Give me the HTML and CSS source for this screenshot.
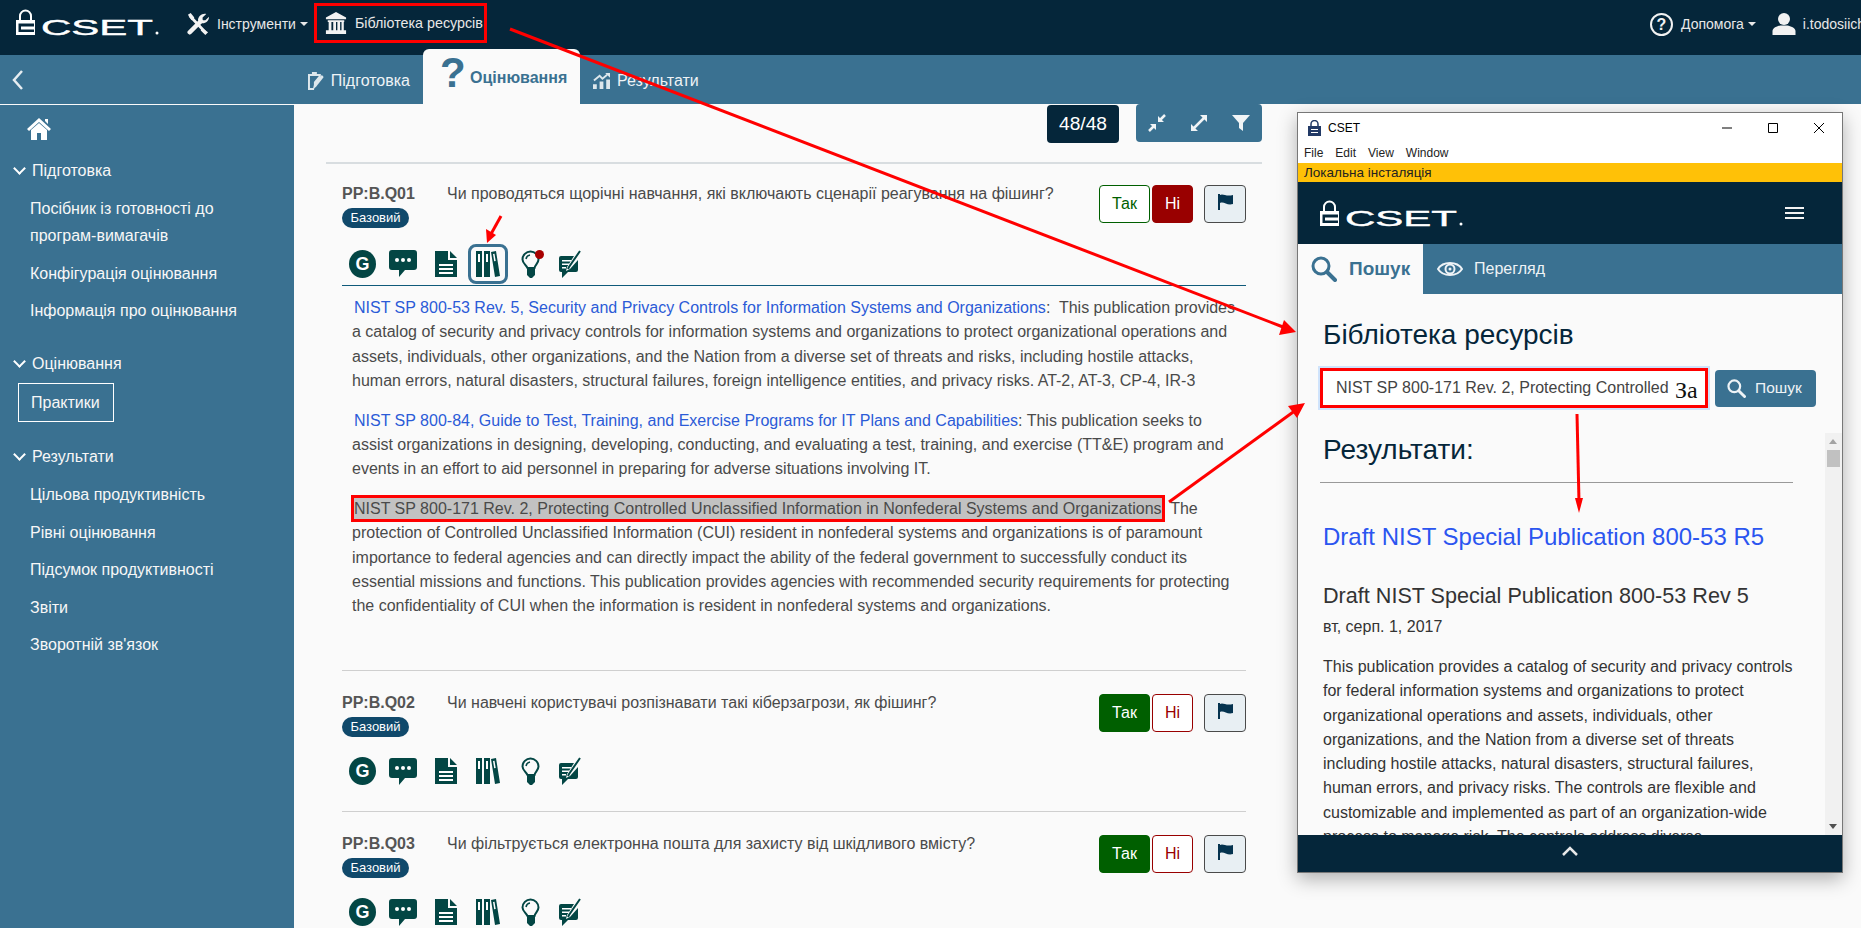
FILE: index.html
```html
<!DOCTYPE html>
<html lang="uk">
<head>
  <meta charset="UTF-8">
  <title>CSET</title>
  <link rel="stylesheet" href="styles.css">
</head>
<body>
  <!-- Icon sprite -->
  <svg class="sprite" aria-hidden="true">
    <symbol id="logo" viewBox="0 0 144 27">
      <path d="M5 11V7a5.500 5.500 0 0 1 11 0v4" fill="none" stroke="currentColor" stroke-width="2"/>
      <path d="M1 11H20V26H1Z M3.500 14.500V23H19V20.500H6V17.500H19V14.500Z" fill="currentColor" fill-rule="evenodd"/>
      <text class="logo-text" x="26" y="26" textLength="112" lengthAdjust="spacingAndGlyphs">CSET</text>
      <circle cx="142" cy="24" r="1.500" fill="currentColor"/>
    </symbol>
    <symbol id="tools" viewBox="0 0 24 24">
      <path d="M3 3L20 21" stroke="currentColor" stroke-width="3" fill="none"/>
      <path d="M1 2L4 0L8 5L5 8Z M16 16L23 21L20 24L15 19Z" fill="currentColor"/>
      <path d="M3 21L15 9" stroke="currentColor" stroke-width="5" stroke-linecap="round" fill="none"/>
      <path d="M21 1L17 5V8H20L24 4C24 9 20 12 15 11L12 8C12 4 16 0 21 1Z" fill="currentColor"/>
    </symbol>
    <symbol id="bank" viewBox="0 0 24 24">
      <path d="M12 0L23 6V8H1V6Z M3 9H21V11H3Z M1 20H23V24H1Z M4 11H7V20H4Z M9 11H12V20H9Z M13.500 11H16.500V20H13.500Z M18 11H20.500V20H18Z" fill="currentColor"/>
    </symbol>
    <symbol id="clipboard" viewBox="0 0 17 20">
      <path d="M1 3H5V1H10V3H14V8L8 15L7 19H1Z" fill="currentColor"/>
      <path d="M3 5H12L7 11V17H3Z" fill="#3a7191"/>
      <path d="M15 4L17 6L9 16L6 18L7 14Z" fill="currentColor"/>
    </symbol>
    <symbol id="chart" viewBox="0 0 18 17">
      <path d="M0 12H4V17H0Z M7 9H11V17H7Z M14 7H18V17H14Z" fill="currentColor"/>
      <path d="M1 8L7 3L10 6L15 2" fill="none" stroke="currentColor" stroke-width="2"/>
      <path d="M13 0H18V5Z" fill="currentColor"/>
    </symbol>
    <symbol id="home" viewBox="0 0 24 22">
      <path d="M12 0L24 11L22 13L12 4L2 13L0 11Z M4 12L12 5L20 12V22H14V15H10V22H4Z M18 1H21V6L18 3Z" fill="currentColor"/>
    </symbol>
    <symbol id="compress" viewBox="0 0 18 18">
      <path d="M17 1L12 6M1 17L6 12" stroke="currentColor" stroke-width="2.500" fill="none"/>
      <path d="M10 2V8H16Z M2 10H8V16Z" fill="currentColor"/>
    </symbol>
    <symbol id="expand" viewBox="0 0 18 18">
      <path d="M3 15L15 3" stroke="currentColor" stroke-width="2.500" fill="none"/>
      <path d="M10 1H17V8Z M1 10V17H8Z" fill="currentColor"/>
    </symbol>
    <symbol id="filter" viewBox="0 0 18 16">
      <path d="M0 0H18L11 8V16L7 13V8Z" fill="currentColor"/>
    </symbol>
    <symbol id="flag" viewBox="0 0 16 16">
      <path d="M1 0H3V16H1Z M3 1C6 -1 9 3 16 1V10C10 12 7 7 3 9Z" fill="currentColor"/>
    </symbol>
    <symbol id="comment" viewBox="0 0 28 27">
      <path d="M3 0H25A3 3 0 0 1 28 3V17A3 3 0 0 1 25 20H16L10 27V20H3A3 3 0 0 1 0 17V3A3 3 0 0 1 3 0Z" fill="currentColor"/>
      <circle cx="8" cy="10" r="2" fill="#fff"/><circle cx="14" cy="10" r="2" fill="#fff"/><circle cx="20" cy="10" r="2" fill="#fff"/>
    </symbol>
    <symbol id="doc" viewBox="0 0 22 26">
      <path d="M0 0H13V9H22V26H0Z M15 0L22 7H15Z" fill="currentColor"/>
      <path d="M4 13H18V15H4Z M4 17H18V19H4Z M4 21H18V23H4Z" fill="#fff"/>
    </symbol>
    <symbol id="books" viewBox="0 0 24 26">
      <path d="M0 0H6V26H0Z M8 0H14V26H8Z M15 1L20 0L24 25L19 26Z" fill="currentColor"/>
      <path d="M2 3H4V11H2Z M10 3H12V11H10Z M17 3L18.500 2.700L19.700 10L18.200 10.300Z" fill="#fff"/>
    </symbol>
    <symbol id="bulb" viewBox="0 0 20 28">
      <path d="M6.500 18C5 15 1.500 13 1.500 9.500A8 8 0 0 1 17.500 9.500C17.500 13 14 15 13.500 18Z" fill="none" stroke="currentColor" stroke-width="2"/>
      <path d="M6 19H14V25L11 28H9L6 25Z" fill="currentColor"/>
      <path d="M5 9A5 5 0 0 1 9 5" fill="none" stroke="currentColor" stroke-width="1.500"/>
    </symbol>
    <symbol id="note" viewBox="0 0 23 28">
      <path d="M2 6H15L8 17L7 21L11 19L19 10V20A2 2 0 0 1 17 22H9L3 28V22H2A2 2 0 0 1 0 20V8A2 2 0 0 1 2 6Z" fill="currentColor"/>
      <path d="M3 10H12V11.500H3Z M3 13.500H10V15H3Z M3 17H7V18.500H3Z" fill="#fff"/>
      <path d="M21 1L10 17L9 19" fill="none" stroke="currentColor" stroke-width="2"/>
    </symbol>
    <symbol id="user" viewBox="0 0 23 22">
      <circle cx="11.500" cy="6" r="6" fill="currentColor"/>
      <path d="M0 22V18C0 15 5 13 8 12.500H15C18 13 23 15 23 18V22Z" fill="currentColor"/>
    </symbol>
    <symbol id="search" viewBox="0 0 26 26">
      <circle cx="10" cy="10" r="8" fill="none" stroke="currentColor" stroke-width="3"/>
      <path d="M16 16L24 24" stroke="currentColor" stroke-width="4" stroke-linecap="round"/>
    </symbol>
    <symbol id="eye" viewBox="0 0 26 18">
      <path d="M1 9C6 1 20 1 25 9C20 17 6 17 1 9Z" fill="none" stroke="currentColor" stroke-width="2"/>
      <circle cx="13" cy="9" r="4.500" fill="none" stroke="currentColor" stroke-width="2"/>
      <circle cx="13" cy="9" r="1.500" fill="currentColor"/>
    </symbol>
    <symbol id="lock" viewBox="0 0 13 16">
      <path d="M3 7V4a3.500 3.500 0 0 1 7 0v3" fill="none" stroke="currentColor" stroke-width="1.500"/>
      <path d="M0 6H13V16H0Z" fill="currentColor"/>
      <path d="M3 9H10V10H3Z M3 12H10V13H3Z" fill="#fff"/>
    </symbol>
  </svg>

  <!-- Top bar -->
  <header class="topbar">
    <svg class="logo"><use href="#logo"/></svg>
    <a class="nav-link nav-tools">
      <svg class="nav-icon"><use href="#tools"/></svg>
      <span>Інструменти</span><i class="caret"></i>
    </a>
    <a class="nav-link nav-library">
      <svg class="nav-icon"><use href="#bank"/></svg>
      <span>Бібліотека ресурсів</span>
    </a>
    <div class="topbar-right">
      <a class="nav-link">
        <span class="help-icon">?</span>
        <span>Допомога</span><i class="caret"></i>
      </a>
      <a class="nav-link nav-user">
        <svg class="nav-icon"><use href="#user"/></svg>
        <span>i.todosiichuk</span>
      </a>
    </div>
  </header>

  <!-- Tabs -->
  <nav class="tabbar">
    <div class="tabbar-side">
      <svg class="back" viewBox="0 0 12 22"><path d="M10 2L2 11L10 20" fill="none" stroke="currentColor" stroke-width="2.500"/></svg>
    </div>
    <a class="tab tab-first"><svg class="tab-icon"><use href="#clipboard"/></svg>Підготовка</a>
    <a class="tab tab-active"><span class="tab-question">?</span>Оцінювання</a>
    <a class="tab"><svg class="tab-icon"><use href="#chart"/></svg>Результати</a>
  </nav>

  <div class="page">
    <!-- Sidebar -->
    <aside class="sidebar">
      <svg class="side-home"><use href="#home"/></svg>

      <div class="side-head side-head-first"><i class="chev"></i>Підготовка</div>
      <a class="side-item">Посібник із готовності до програм-вимагачів</a>
      <a class="side-item">Конфігурація оцінювання</a>
      <a class="side-item">Інформація про оцінювання</a>

      <div class="side-head side-head-assess"><i class="chev"></i>Оцінювання</div>
      <a class="side-active">Практики</a>

      <div class="side-head side-head-results"><i class="chev"></i>Результати</div>
      <a class="side-item">Цільова продуктивність</a>
      <a class="side-item">Рівні оцінювання</a>
      <a class="side-item">Підсумок продуктивності</a>
      <a class="side-item">Звіти</a>
      <a class="side-item">Зворотній зв'язок</a>
    </aside>

    <!-- Questions -->
    <main class="content">
      <div class="toolbar">
        <span class="count">48/48</span>
        <div class="tool-group">
          <a class="tool-btn"><svg><use href="#compress"/></svg></a>
          <a class="tool-btn"><svg><use href="#expand"/></svg></a>
          <a class="tool-btn"><svg><use href="#filter"/></svg></a>
        </div>
      </div>

      <section class="question question-open">
        <div class="q-head">
          <div class="q-id">
            <div class="q-code">PP:B.Q01</div>
            <span class="badge">Базовий</span>
          </div>
          <div class="q-text">Чи проводяться щорічні навчання, які включають сценарії реагування на фішинг?</div>
          <div class="answers">
            <button class="btn-yes">Так</button>
            <button class="btn-no btn-no-on">Ні</button>
            <button class="btn-flag"><svg><use href="#flag"/></svg></button>
          </div>
        </div>
        <div class="q-tools q-tools-open">
          <span class="g-icon">G</span>
          <svg class="ic ic-comment"><use href="#comment"/></svg>
          <svg class="ic ic-doc"><use href="#doc"/></svg>
          <span class="ic-selected"><svg class="ic ic-books"><use href="#books"/></svg></span>
          <span class="bulb-wrap"><svg class="ic ic-bulb"><use href="#bulb"/></svg><i class="bulb-dot"></i></span>
          <svg class="ic ic-note"><use href="#note"/></svg>
        </div>
        <div class="refs">
          <p><a class="ref-link">NIST SP 800-53 Rev. 5, Security and Privacy Controls for Information Systems and Organizations</a>:&nbsp; This publication provides a catalog of security and privacy controls for information systems and organizations to protect organizational operations and assets, individuals, other organizations, and the Nation from a diverse set of threats and risks, including hostile attacks, human errors, natural disasters, structural failures, foreign intelligence entities, and privacy risks. AT-2, AT-3, CP-4, IR-3</p>
          <p><a class="ref-link">NIST SP 800-84, Guide to Test, Training, and Exercise Programs for IT Plans and Capabilities</a>: This publication seeks to assist organizations in designing, developing, conducting, and evaluating a test, training, and exercise (TT&amp;E) program and events in an effort to aid personnel in preparing for adverse situations involving IT.</p>
          <p><mark class="ref-mark">NIST SP 800-171 Rev. 2, Protecting Controlled Unclassified Information in Nonfederal Systems and Organizations</mark>&nbsp; The protection of Controlled Unclassified Information (CUI) resident in nonfederal systems and organizations is of paramount importance to federal agencies and can directly impact the ability of the federal government to successfully conduct its essential missions and functions. This publication provides agencies with recommended security requirements for protecting the confidentiality of CUI when the information is resident in nonfederal systems and organizations.</p>
        </div>
      </section>

      <section class="question">
        <div class="q-head">
          <div class="q-id">
            <div class="q-code">PP:B.Q02</div>
            <span class="badge">Базовий</span>
          </div>
          <div class="q-text">Чи навчені користувачі розпізнавати такі кіберзагрози, як фішинг?</div>
          <div class="answers">
            <button class="btn-yes btn-yes-on">Так</button>
            <button class="btn-no">Ні</button>
            <button class="btn-flag"><svg><use href="#flag"/></svg></button>
          </div>
        </div>
        <div class="q-tools">
          <span class="g-icon">G</span>
          <svg class="ic ic-comment"><use href="#comment"/></svg>
          <svg class="ic ic-doc"><use href="#doc"/></svg>
          <span class="ic-plain"><svg class="ic ic-books"><use href="#books"/></svg></span>
          <span class="bulb-wrap"><svg class="ic ic-bulb"><use href="#bulb"/></svg></span>
          <svg class="ic ic-note"><use href="#note"/></svg>
        </div>
      </section>

      <section class="question">
        <div class="q-head">
          <div class="q-id">
            <div class="q-code">PP:B.Q03</div>
            <span class="badge">Базовий</span>
          </div>
          <div class="q-text">Чи фільтрується електронна пошта для захисту від шкідливого вмісту?</div>
          <div class="answers">
            <button class="btn-yes btn-yes-on">Так</button>
            <button class="btn-no">Ні</button>
            <button class="btn-flag"><svg><use href="#flag"/></svg></button>
          </div>
        </div>
        <div class="q-tools">
          <span class="g-icon">G</span>
          <svg class="ic ic-comment"><use href="#comment"/></svg>
          <svg class="ic ic-doc"><use href="#doc"/></svg>
          <span class="ic-plain"><svg class="ic ic-books"><use href="#books"/></svg></span>
          <span class="bulb-wrap"><svg class="ic ic-bulb"><use href="#bulb"/></svg></span>
          <svg class="ic ic-note"><use href="#note"/></svg>
        </div>
      </section>
    </main>
  </div>

  <!-- Resource library window -->
  <div class="window">
    <div class="win-title">
      <svg class="win-lock"><use href="#lock"/></svg>
      <span>CSET</span>
      <div class="win-controls">
        <svg viewBox="0 0 12 12"><path d="M1 6H11" stroke="#000" fill="none"/></svg>
        <svg viewBox="0 0 12 12"><path d="M1.500 1.500H10.500V10.500H1.500Z" stroke="#000" fill="none"/></svg>
        <svg viewBox="0 0 12 12"><path d="M1 1L11 11M11 1L1 11" stroke="#000" fill="none"/></svg>
      </div>
    </div>
    <div class="win-menu"><span>File</span><span>Edit</span><span>View</span><span>Window</span></div>
    <div class="win-local">Локальна інсталяція</div>
    <div class="win-header">
      <svg class="logo"><use href="#logo"/></svg>
      <div class="burger"><i></i><i></i><i></i></div>
    </div>
    <div class="win-tabs">
      <a class="win-tab win-tab-active"><svg class="win-search"><use href="#search"/></svg>Пошук</a>
      <a class="win-tab"><svg class="win-eye"><use href="#eye"/></svg>Перегляд</a>
    </div>
    <div class="win-search-area">
      <h2 class="win-h">Бібліотека ресурсів</h2>
      <div class="search-row">
        <div class="search-box">
          <input class="search-input" value="NIST SP 800-171 Rev. 2, Protecting Controlled Unclassified Information">
          <span class="translate-bubble">За</span>
        </div>
        <button class="search-btn"><svg><use href="#search"/></svg>Пошук</button>
      </div>
    </div>
    <div class="win-results">
      <div class="results-scroll">
        <h2 class="win-h">Результати:</h2>
        <hr class="results-hr">
        <a class="result-link">Draft NIST Special Publication 800-53 R5</a>
        <h3 class="result-title">Draft NIST Special Publication 800-53 Rev 5</h3>
        <div class="result-date">вт, серп. 1, 2017</div>
        <p class="result-body">This publication provides a catalog of security and privacy controls for federal information systems and organizations to protect organizational operations and assets, individuals, other organizations, and the Nation from a diverse set of threats including hostile attacks, natural disasters, structural failures, human errors, and privacy risks. The controls are flexible and customizable and implemented as part of an organization-wide process to manage risk. The controls address diverse</p>
      </div>
      <div class="scrollbar">
        <i class="sb-up"></i>
        <i class="sb-thumb"></i>
        <i class="sb-down"></i>
      </div>
    </div>
    <div class="win-footer">
      <svg viewBox="0 0 16 10"><path d="M1 9L8 2L15 9" fill="none" stroke="currentColor" stroke-width="2.500"/></svg>
    </div>
  </div>

  <!-- Red annotation arrows -->
  <svg class="arrows" viewBox="0 0 1861 928">
    <path d="M510 29L1283 327" class="arrow-line"/>
    <path d="M1296 332L1279 335L1284 320Z" class="arrow-head"/>
    <path d="M1169 502L1296 410" class="arrow-line"/>
    <path d="M1305 403L1297 418L1288 406Z" class="arrow-head"/>
    <path d="M501 216L491 234" class="arrow-line"/>
    <path d="M487 243L486 229L496 235Z" class="arrow-head"/>
    <path d="M1577 414L1579 502" class="arrow-line"/>
    <path d="M1579 513L1575 498L1583 498Z" class="arrow-head"/>
  </svg>
</body>
</html>
```

FILE: styles.css
```css
/* Page */
html, body {
  height: 100%;
}

body {
  margin: 0;
  height: 928px;
  overflow: hidden;
  display: flex;
  flex-direction: column;
  position: relative;
  font-family: "Liberation Sans", Arial, sans-serif;
  font-size: 16px;
  color: #4a4a4a;
  background-color: #fafafa;
}

.sprite {
  position: absolute;
  width: 0;
  height: 0;
}

.logo-text {
  font-family: "Liberation Sans", Arial, sans-serif;
  font-size: 22px;
  fill: currentColor;
  stroke: currentColor;
  stroke-width: 0.4px;
}

/* Top bar */
.topbar {
  height: 55px;
  flex: none;
  box-sizing: border-box;
  display: flex;
  align-items: center;
  padding: 0 0 7px 15px;
  background-color: #05263a;
  color: #f2f2f2;
}

.logo {
  width: 144px;
  height: 27px;
  color: #fff;
}

.topbar .logo {
  margin-top: -3px;
}

.nav-link {
  display: flex;
  align-items: center;
  font-size: 14px;
  color: #e8e8e8;
  white-space: nowrap;
}

.nav-tools {
  margin-left: 27px;
}

.nav-library {
  margin: -2px 0 0 6px;
  height: 40px;
  width: 173px;
  padding: 0 0 0 7px;
  border: 3px solid #f00;
  box-sizing: border-box;
  font-size: 14.300px;
}

.nav-icon {
  flex: none;
  width: 24px;
  height: 22px;
  margin-right: 7px;
  color: #f2f2f2;
}

.caret {
  display: inline-block;
  margin-left: 4px;
  border-top: 4px solid #e8e8e8;
  border-left: 4px solid transparent;
  border-right: 4px solid transparent;
}

.topbar-right {
  margin-left: auto;
  display: flex;
  width: 211px;
  overflow: hidden;
  flex: none;
}

.help-icon {
  width: 19px;
  height: 19px;
  margin-right: 8px;
  border: 2.500px solid #f2f2f2;
  border-radius: 50%;
  font-size: 16px;
  font-weight: bold;
  line-height: 19px;
  text-align: center;
  color: #f2f2f2;
}

.nav-user {
  margin-left: 16px;
}

/* Tabs */
.tabbar {
  height: 49px;
  flex: none;
  display: flex;
  align-items: flex-end;
  background-color: #3a7191;
  color: #eef3f6;
}

.tabbar-side {
  width: 294px;
  height: 49px;
  padding-left: 12px;
  box-sizing: border-box;
}

.back {
  width: 12px;
  height: 22px;
  margin-top: 14px;
  color: #e6edf1;
}

.tab {
  display: flex;
  align-items: center;
  height: 49px;
  padding: 2px 13px 0;
  box-sizing: border-box;
  font-size: 16px;
  white-space: nowrap;
}

.tab-first {
  width: 129px;
}

.tab-icon {
  width: 17px;
  height: 20px;
  margin-right: 7px;
  color: #dde7ec;
}

.tab-active {
  width: 157px;
  height: 55px;
  padding: 3px 0 0 17px;
  border-radius: 6px 6px 0 0;
  background-color: #fafafa;
  color: #3a7191;
  font-weight: bold;
}

.tab-question {
  width: 30px;
  margin-top: -10px;
  font-size: 42px;
  line-height: 42px;
}

/* Layout below the tabs */
.page {
  flex: 1;
  min-height: 0;
  display: flex;
}

/* Sidebar */
.sidebar {
  width: 294px;
  flex: none;
  box-sizing: border-box;
  padding-left: 30px;
  border-top: 1px solid #fafafa;
  background-color: #3a7191;
  color: #f7f7f7;
}

.side-home {
  display: block;
  width: 24px;
  height: 22px;
  margin: 13px 0 0 -3px;
  color: #fff;
}

.side-head {
  position: relative;
  line-height: 27px;
  padding-left: 2px;
}

.side-head-first {
  margin-top: 17px;
  margin-bottom: 11px;
}

.side-head-assess {
  margin-top: 26px;
  margin-bottom: 6px;
}

.side-head-results {
  margin-top: 21px;
  margin-bottom: 11px;
}

.chev {
  position: absolute;
  left: -15px;
  top: 7px;
  width: 7px;
  height: 7px;
  border-right: 2.500px solid #fff;
  border-bottom: 2.500px solid #fff;
  transform: rotate(45deg);
}

.side-item {
  display: block;
  width: 230px;
  line-height: 27px;
  margin-bottom: 10.500px;
}

.side-active {
  display: block;
  width: 96px;
  height: 39px;
  margin-left: -12px;
  box-sizing: border-box;
  border: 1px solid #fff;
  line-height: 37px;
  padding-left: 12px;
}

/* Question list */
.content {
  width: 936px;
  margin-left: 32px;
  overflow: hidden;
}

.toolbar {
  height: 58px;
  display: flex;
  justify-content: flex-end;
  align-items: flex-start;
  box-sizing: content-box;
  border-bottom: 2px solid #d8dde0;
}

.count {
  width: 72px;
  height: 38px;
  margin: 1px 17px 0 0;
  border-radius: 4px;
  background-color: #05263a;
  color: #fff;
  font-size: 19.200px;
  line-height: 38px;
  text-align: center;
}

.tool-group {
  display: flex;
  width: 126px;
  height: 38px;
  border-radius: 4px;
  background-color: #3a7191;
}

.tool-btn {
  flex: 1;
  display: flex;
  align-items: center;
  justify-content: center;
  color: #f0f4f6;
}

.tool-btn svg {
  width: 18px;
  height: 18px;
}

.question {
  margin: 0 16px;
  padding: 23px 0 19px;
  border-bottom: 1px solid #cfcfcf;
}

.question-open {
  padding-top: 21px;
  padding-bottom: 0;
}

.q-head {
  display: flex;
  height: 57px;
}

.q-id {
  width: 105px;
  flex: none;
}

.q-code {
  font-weight: bold;
  line-height: 18px;
  color: #555;
}

.badge {
  display: inline-block;
  margin-top: 5px;
  width: 67px;
  height: 20px;
  border-radius: 10px;
  background-color: #10496b;
  color: #fff;
  font-size: 13px;
  line-height: 20px;
  text-align: center;
}

.q-text {
  flex: 1;
  line-height: 18px;
  color: #4a4a4a;
}

.answers {
  display: flex;
  align-items: flex-start;
}

.answers button {
  height: 38px;
  padding: 0;
  border-radius: 4px;
  font-family: inherit;
  font-size: 16px;
  background-color: #fff;
}

.btn-yes {
  width: 51px;
  margin-right: 2px;
  border: 1px solid #005f00;
  color: #005f00;
}

.btn-yes-on {
  background-color: #005f00 !important;
  color: #fff;
}

.btn-no {
  width: 41px;
  margin-right: 11px;
  border: 1px solid #990000;
  color: #990000;
}

.btn-no-on {
  background-color: #990000 !important;
  color: #fff;
}

.btn-flag {
  width: 42px;
  border: 1px solid #4a4a4a;
  background-color: #e8eff3 !important;
  color: #05334f;
}

.btn-flag svg {
  width: 16px;
  height: 16px;
}

/* Icon row under each question */
.q-tools {
  display: flex;
  align-items: center;
  height: 41px;
  padding-left: 7px;
  color: #034644;
}

.q-tools-open {
  height: 43px;
  border-bottom: 1px solid #0f5a7a;
  margin-bottom: 10px;
}

.g-icon {
  width: 27px;
  height: 28px;
  margin-right: 13px;
  border-radius: 50%;
  background-color: #034644;
  color: #fff;
  font-size: 18px;
  font-weight: bold;
  line-height: 28px;
  text-align: center;
}

.ic-comment {
  width: 28px;
  height: 27px;
  margin-right: 18px;
}

.ic-doc {
  width: 22px;
  height: 26px;
  margin-right: 11px;
}

.ic-selected,
.ic-plain {
  display: flex;
  align-items: center;
  justify-content: center;
  width: 40px;
  height: 40px;
  margin-right: 13px;
  box-sizing: border-box;
  border-radius: 8px;
}

.ic-selected {
  border: 3px solid #3a7191;
}

.ic-books {
  width: 24px;
  height: 26px;
}

.bulb-wrap {
  position: relative;
  display: block;
  width: 20px;
  height: 28px;
  margin-right: 18px;
}

.ic-bulb {
  width: 20px;
  height: 28px;
}

.bulb-dot {
  position: absolute;
  right: -3px;
  top: 0;
  width: 9px;
  height: 9px;
  border-radius: 50%;
  background-color: #a80000;
}

.ic-note {
  width: 23px;
  height: 28px;
}

/* Reference list */
.refs {
  padding: 0 0 51px 10px;
  line-height: 24.300px;
}

.refs p {
  margin: 0 0 15.500px;
}

.refs p:last-child {
  margin-bottom: 0;
}

.ref-link {
  margin-left: 2px;
  color: #2b5bd7;
}

.ref-mark {
  margin-left: 2px;
  padding: 2px 0;
  background-color: #c2c2c2;
  outline: 3px solid #f00;
  color: #4a4a4a;
}

/* Resource library window */
.window {
  position: absolute;
  left: 1297px;
  top: 112px;
  width: 546px;
  height: 761px;
  box-sizing: border-box;
  display: flex;
  flex-direction: column;
  border: 1px solid #777;
  background-color: #fafafa;
  box-shadow: 0 6px 18px rgba(0, 0, 0, 0.3);
  color: #333;
}

.win-title {
  height: 30px;
  flex: none;
  display: flex;
  align-items: center;
  padding-left: 10px;
  background-color: #fff;
  font-size: 12px;
  color: #000;
}

.win-lock {
  width: 13px;
  height: 16px;
  margin-right: 7px;
  color: #223a66;
}

.win-controls {
  margin-left: auto;
  display: flex;
  gap: 34px;
  padding-right: 17px;
}

.win-controls svg {
  width: 12px;
  height: 12px;
}

.win-menu {
  height: 20px;
  flex: none;
  padding: 0 0 0 6px;
  display: flex;
  gap: 12px;
  align-items: center;
  background-color: #fff;
  font-size: 12px;
  line-height: 14px;
  color: #222;
}

.win-local {
  height: 19px;
  flex: none;
  padding-left: 6px;
  background-color: #ffc107;
  color: #222;
  font-size: 13.500px;
  line-height: 19px;
}

.win-header {
  height: 62px;
  flex: none;
  display: flex;
  align-items: center;
  justify-content: space-between;
  padding: 0 38px 0 21px;
  background-color: #05263a;
}

.burger i {
  display: block;
  width: 19px;
  height: 2px;
  margin: 3px 0;
  background-color: #f2f2f2;
}

.win-tabs {
  height: 50px;
  flex: none;
  display: flex;
  background-color: #3a7191;
  color: #eef3f6;
}

.win-tab {
  display: flex;
  align-items: center;
  padding-left: 14px;
  font-size: 16px;
}

.win-tab-active {
  width: 125px;
  padding-left: 13px;
  box-sizing: border-box;
  background-color: #fafafa;
  color: #3a7191;
  font-size: 19px;
  font-weight: bold;
}

.win-search {
  width: 26px;
  height: 26px;
  margin-right: 12px;
}

.win-eye {
  width: 26px;
  height: 18px;
  margin-right: 11px;
}

.win-search-area {
  height: 139px;
  flex: none;
  padding-left: 22px;
  box-sizing: border-box;
}

.win-h {
  margin: 0;
  font-size: 28px;
  font-weight: normal;
  line-height: 34px;
  color: #05263a;
  padding-left: 3px;
}

.win-search-area .win-h {
  margin-top: 24px;
}

.search-row {
  display: flex;
  align-items: center;
  gap: 7px;
  margin-top: 16px;
}

.search-box {
  position: relative;
  width: 388px;
  height: 40px;
}

.search-input {
  width: 100%;
  height: 100%;
  padding: 0 35px 0 13px;
  box-sizing: border-box;
  border: 3px solid #f00;
  background-color: #fff;
  box-shadow: 0 0 0 2px #cfe3fb;
  font-family: inherit;
  font-size: 16px;
  color: #444;
  outline: none;
}

.translate-bubble {
  position: absolute;
  right: 10px;
  top: 4px;
  width: 23px;
  height: 32px;
  background-color: #fff;
  border-radius: 10px;
  font-family: "Liberation Serif", serif;
  font-size: 24px;
  line-height: 36px;
  color: #111;
  overflow: hidden;
}

.search-btn {
  display: flex;
  align-items: center;
  width: 101px;
  height: 37px;
  padding: 0 0 0 12px;
  border: none;
  border-radius: 4px;
  background-color: #3a7191;
  color: #eef3f6;
  font-family: inherit;
  font-size: 15.500px;
}

.search-btn svg {
  width: 19px;
  height: 19px;
  margin-right: 9px;
}

.win-results {
  flex: 1;
  min-height: 0;
  display: flex;
}

.results-scroll {
  flex: 1;
  overflow: hidden;
  padding: 0 32px 0 22px;
}

.results-hr {
  margin: 15px 0 0;
  border: none;
  border-top: 1px solid #999;
}

.result-link {
  display: block;
  margin: 41px 0 0 3px;
  font-size: 24px;
  line-height: 26px;
  color: #2b55f0;
}

.result-title {
  margin: 33px 0 0 3px;
  font-size: 21.600px;
  font-weight: normal;
  line-height: 26px;
  color: #333;
}

.result-date {
  margin: 7px 0 0 3px;
  line-height: 22px;
  color: #333;
}

.result-body {
  margin: 17px 0 0 3px;
  line-height: 24.300px;
  color: #333;
}

.scrollbar {
  position: relative;
  width: 17px;
  flex: none;
  background-color: #f1f1f1;
}

.sb-up,
.sb-down {
  position: absolute;
  left: 4px;
  border-left: 4px solid transparent;
  border-right: 4px solid transparent;
}

.sb-up {
  top: 6px;
  border-bottom: 5px solid #a3a3a3;
}

.sb-down {
  bottom: 6px;
  border-top: 5px solid #505050;
}

.sb-thumb {
  position: absolute;
  left: 2px;
  top: 17px;
  width: 13px;
  height: 17px;
  background-color: #c1c1c1;
}

.win-footer {
  height: 37px;
  flex: none;
  display: flex;
  justify-content: center;
  padding-top: 11px;
  box-sizing: border-box;
  background-color: #05263a;
  color: #e8e8e8;
}

.win-footer svg {
  width: 16px;
  height: 10px;
}

/* Annotations */
.arrows {
  position: absolute;
  left: 0;
  top: 0;
  width: 1861px;
  height: 928px;
  pointer-events: none;
}

.arrow-line {
  fill: none;
  stroke: #f00;
  stroke-width: 3;
}

.arrow-head {
  fill: #f00;
}
```
